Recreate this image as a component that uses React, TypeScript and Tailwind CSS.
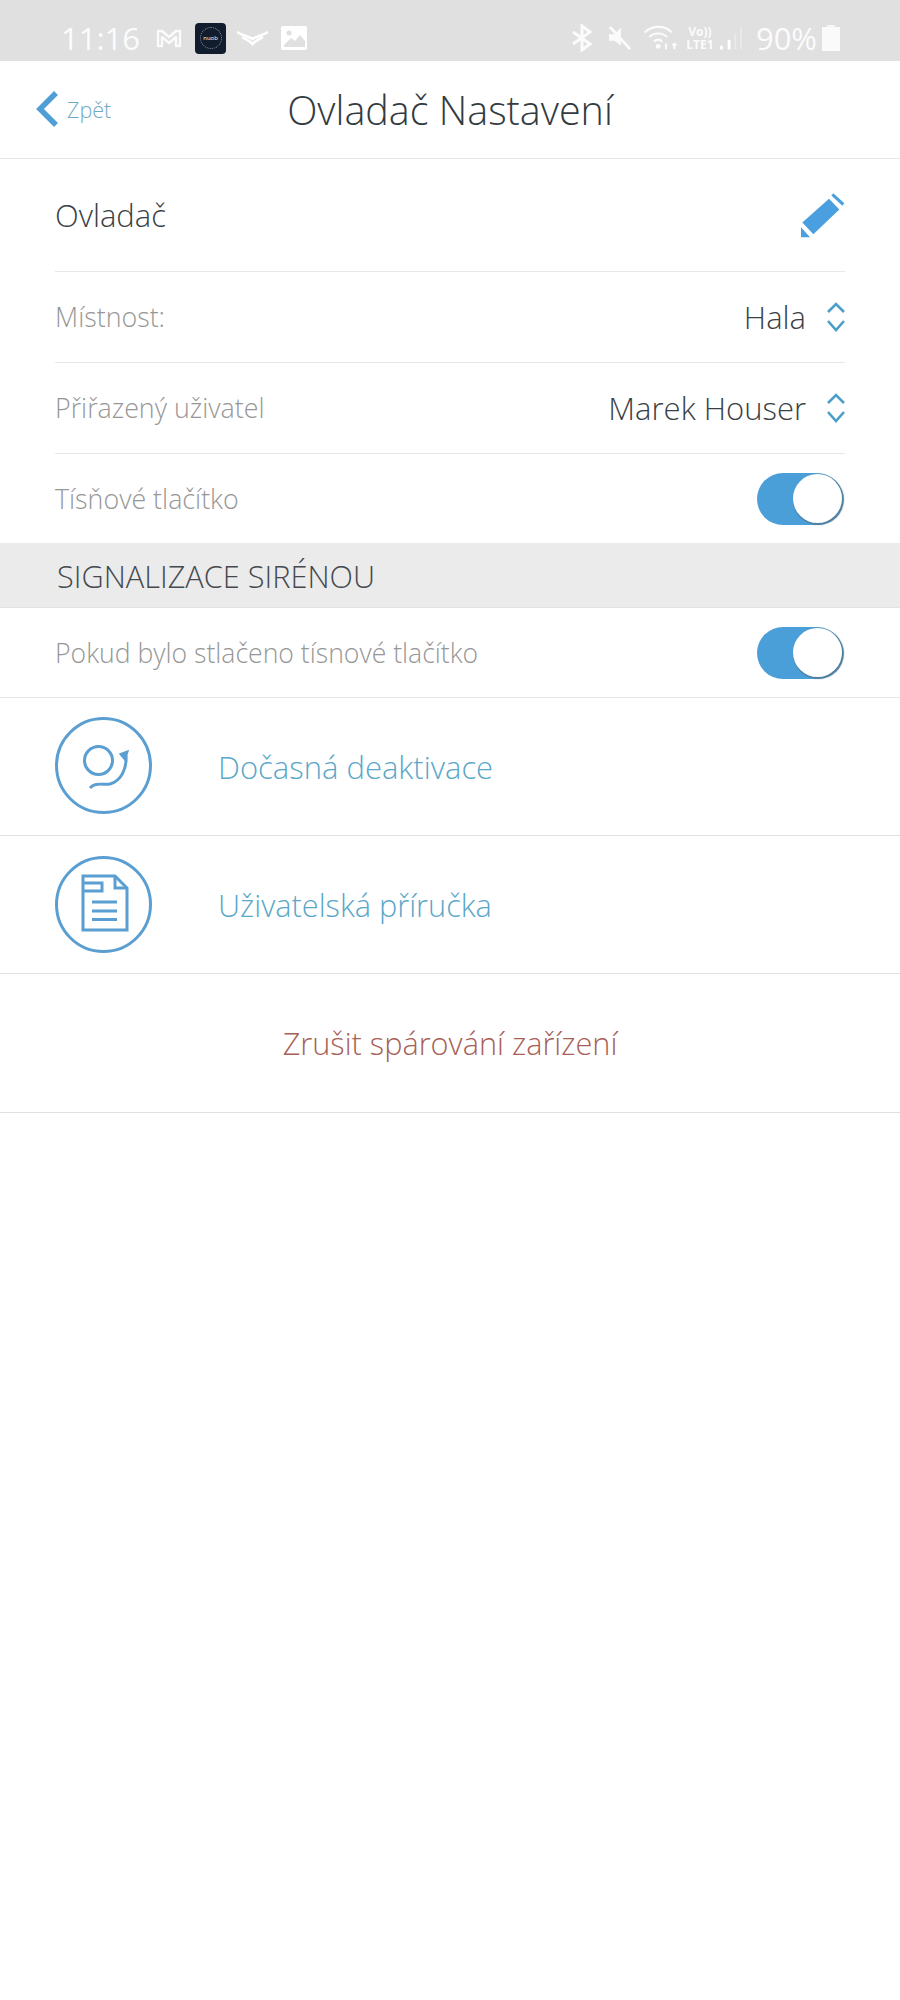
import React from 'react';

const font = "font-['Open_Sans',sans-serif]";

function Updown() {
    return (
        <svg width="20" height="32" viewBox="0 0 20 32" fill="none" stroke="#4a9fc9" strokeWidth="2.6" className="ml-[20px] -mr-[1px]">
            <path d="M2 11 L10 3 L18 11"/>
            <path d="M2 20 L10 29 L18 20"/>
        </svg>
    );
}

function Toggle() {
    return (
        <div className="w-[86px] h-[52px] mr-[2px] rounded-full bg-[#4a9fd8] relative shrink-0">
            <div className="absolute right-[1px] top-[1px] w-[49px] h-[49px] rounded-full bg-white shadow-[1px_1px_1px_1px_#4f7f9e]"/>
        </div>
    );
}

function StatusBar() {
    return (
        <div className="h-[61px] bg-[#e0e0e0] flex items-center text-white pl-[61px] pr-[60px] pt-[15px]">
            <span className="text-[31px] font-normal opacity-90 leading-none">11:16</span>
            <svg width="26" height="19" viewBox="0 0 26 19" fill="none" stroke="#fff" strokeWidth="2.4" strokeLinejoin="round" className="ml-[16px] opacity-90">
                <path d="M2 2 H6 L13 8 L20 2 H24 V17 H20 V8 L13 14 L6 8 V17 H2 Z"/>
            </svg>
            <div className="w-[31px] h-[31px] ml-[13px] rounded-[4px] bg-[#111c2c] flex items-center justify-center">
                <div className="w-[22px] h-[22px] rounded-full border border-dotted border-[#7f8fa6] flex items-center justify-center">
                    <span className="text-[6px] leading-none text-white">nuob</span>
                </div>
            </div>
            <svg width="31" height="16" viewBox="0 0 31 16" fill="none" stroke="#fff" strokeWidth="2.6" className="ml-[11px]">
                <path d="M0 2 C6 6 12 6 15.5 9 C19 6 25 6 31 2"/>
                <path d="M5 7 C10 10 13 11 15.5 14 C18 11 21 10 26 7"/>
            </svg>
            <svg width="26" height="24" viewBox="0 0 26 24" className="ml-[13px]">
                <rect width="26" height="24" rx="2" fill="#fff"/>
                <circle cx="8" cy="7" r="2.5" fill="#e0e0e0"/>
                <path d="M3 19 L10 12 L14 15 L19 9 L24 15 V21 H3 Z" fill="#e0e0e0"/>
            </svg>
            <div className="flex-1"/>
            <svg width="24" height="28" viewBox="0 0 24 28" fill="none" stroke="#fff" strokeWidth="3" className="mr-[14px] opacity-90">
                <path d="M3 8 L20 20 L12 26 V2 L20 8 L3 20"/>
            </svg>
            <svg width="24" height="26" viewBox="0 0 26 28" fill="#fff" className="mr-[11px] opacity-90">
                <path d="M1 10 H7 L14 3 V22 L7 17 H1 Z"/>
                <path d="M2 2 L24 26" stroke="#fff" strokeWidth="3"/>
            </svg>
            <svg width="35" height="26" viewBox="0 0 36 28" fill="none" stroke="#fff" strokeWidth="2.2" className="mr-[7px] opacity-90">
                <path d="M1 8 C9 0 23 0 30 8"/>
                <path d="M6 13 C11 8 20 8 25 13"/>
                <path d="M11 18 C14 15 17 15 20 18"/>
                <circle cx="15.5" cy="23" r="1.5" fill="#fff"/>
                <path d="M24 20 V26 M33 26 V20 M31 22 L33 20 L35 22"/>
            </svg>
            <div className="flex flex-col items-center text-[12px] font-bold leading-[13px] w-[30px] mr-[5px] opacity-90">
                <span>Vo))</span>
                <span>LTE1</span>
            </div>
            <svg width="23" height="26" viewBox="0 0 24 26" fill="#fff" className="mr-[13px]">
                <rect x="0" y="21" width="3" height="4"/>
                <rect x="8" y="15" width="3" height="10"/>
                <rect x="15" y="8" width="2" height="17" opacity="0.3"/>
                <rect x="21" y="1" width="2" height="24" opacity="0.3"/>
            </svg>
            <span className="text-[31px] leading-none opacity-90">90%</span>
            <div className="ml-[5px] mt-[2px] w-[18px] h-[24px] bg-white/85 relative">
                <div className="absolute -top-[2px] left-[5px] w-[8px] h-[2px] bg-white/70"/>
            </div>
        </div>
    );
}

function Row({label, children}: { label: string, children: React.ReactNode }) {
    return (
        <div className="h-[91px] border-b border-[#e8e8e8] flex items-center justify-between">
            <span className="text-[26.8px] font-light text-[#979797]">{label}</span>
            <div className="flex items-center">{children}</div>
        </div>
    );
}

export default function App() {
    return (
        <div className={`w-[900px] h-[2000px] bg-white ${font}`}>
            <StatusBar/>

            {/* Header */}
            <div className="h-[98px] border-b border-[#e6e6e6] flex items-center relative">
                <svg width="24" height="36" viewBox="0 0 24 36" fill="none" stroke="#4f9fd6" strokeWidth="5.5" className="ml-[35px] mt-[-2px]">
                    <path d="M21 2 L5 18 L21 34"/>
                </svg>
                <span className="ml-[8px] text-[21.5px] font-light text-[#6fa9c4] pt-[1px]">Zpět</span>
                <div className="absolute inset-0 flex items-center justify-center pointer-events-none">
                    <span className="text-[39.5px] font-light text-[#333b42] pt-[2px]">Ovladač Nastavení</span>
                </div>
            </div>

            <div className="px-[55px]">
                <div className="h-[113px] border-b border-[#e8e8e8] flex items-center justify-between">
                    <span className="text-[31px] font-light text-[#3a3f45]">Ovladač</span>
                    <svg width="45" height="45" viewBox="600 68 135 134" fill="#4a9fe0">
                        <path d="M700 68 L733 98 L727 106 L694 75 Z"/>
                        <path d="M687 85 L718 117 L640 191 L607 156 Z"/>
                        <path d="M603 170 L630 200 L603 200 Z"/>
                    </svg>
                </div>
                <Row label="Místnost:">
                    <span className="text-[31px] font-light text-[#3a3f45]">Hala</span>
                    <Updown/>
                </Row>
                <Row label="Přiřazený uživatel">
                    <span className="text-[31px] font-light text-[#3a3f45]">Marek Houser</span>
                    <Updown/>
                </Row>
                <div className="h-[89px] flex items-center justify-between">
                    <span className="text-[26.8px] font-light text-[#979797] pt-[2px]">Tísňové tlačítko</span>
                    <Toggle/>
                </div>
            </div>

            <div className="h-[65px] bg-[#ebebeb] border-b border-[#e3e3e3] flex items-center pl-[57px]">
                <span className="text-[30.7px] font-light text-[#44494e] pt-[2px]">SIGNALIZACE SIRÉNOU</span>
            </div>

            <div className="h-[90px] border-b border-[#e6e6e6] flex items-center justify-between px-[55px]">
                <span className="text-[26.6px] font-light text-[#979797] pt-[2px]">Pokud bylo stlačeno tísnové tlačítko</span>
                <Toggle/>
            </div>

            <div className="h-[138px] border-b border-[#e0e0e0] flex items-center pl-[55px]">
                <svg width="97" height="97" viewBox="0 0 97 97" fill="none" stroke="#5b9fd2" strokeWidth="3" className="-mt-[3px]">
                    <circle cx="48.5" cy="48.5" r="47"/>
                    <circle cx="43.5" cy="43.5" r="14"/>
                    <path d="M35 71 C40 65 47 68 55 67 C66 64 72 52 71 38"/>
                    <path d="M65 37 L73 34 L70 43 Z" fill="#5b9fd2" strokeWidth="1.5"/>
                </svg>
                <span className="ml-[66px] text-[31px] font-light text-[#5ba7c9] pt-[2px]">Dočasná deaktivace</span>
            </div>

            <div className="h-[138px] border-b border-[#e0e0e0] flex items-center pl-[55px]">
                <svg width="97" height="97" viewBox="0 0 97 97" fill="none" stroke="#5b9fd2" strokeWidth="3">
                    <circle cx="48.5" cy="48.5" r="47"/>
                    <path d="M28 20 H60 L72 32 V74 H28 Z"/>
                    <path d="M60 20 V32 H72"/>
                    <path d="M28 27 H47 V35 H28"/>
                    <path d="M37 46 H62 M37 55 H62 M37 63.5 H62"/>
                </svg>
                <span className="ml-[66px] text-[30.7px] font-light text-[#5ba7c9] pt-[2px]">Uživatelská příručka</span>
            </div>

            <div className="h-[139px] border-b border-[#e0e0e0] flex items-center justify-center">
                <span className="text-[30.7px] font-light text-[#a85f58] pt-[1px]">Zrušit spárování zařízení</span>
            </div>
        </div>
    );
}
